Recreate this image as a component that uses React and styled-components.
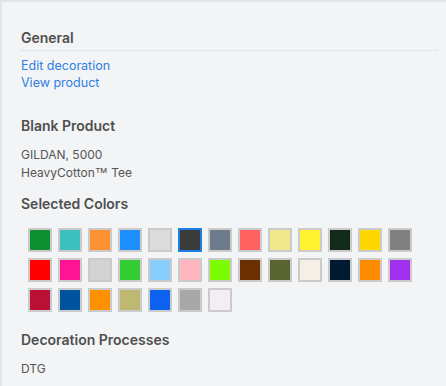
import React from "react";
import styled, { createGlobalStyle } from "styled-components";

const Global = createGlobalStyle`
  html, body { margin: 0; padding: 0; background: #f3f4f6; }
  body { font-family: Inter, "Noto Sans", sans-serif; }
`;

const Panel = styled.div`
  box-sizing: border-box;
  width: 446px;
  height: 386px;
  overflow: hidden;
  background: #f3f4f6;
  border-top: 2px solid #e4e5e7;
  border-left: 2px solid #e4e5e7;
  padding: 26px 8px 0 19px;
  color: #555;
`;

const Section = styled.section`
  margin-top: ${(p) => p.$gap || 0}px;
`;

const Title = styled.h3`
  margin: 0;
  font-size: 14px;
  line-height: 20px;
  font-weight: 600;
  color: #4f4f4f;
  padding-bottom: ${(p) => (p.$rule ? 2 : 0)}px;
  border-bottom: ${(p) => (p.$rule ? "1px dotted #d6d7da" : "none")};
`;

const Links = styled.div`
  margin-top: 6px;
  display: flex;
  flex-direction: column;
`;

const Link = styled.a`
  font-size: 12.5px;
  line-height: 17px;
  color: #2f80e4;
  text-decoration: none;
`;

const Body = styled.div`
  margin-top: ${(p) => p.$gap}px;
  font-size: 12px;
  line-height: 18px;
  color: #555;
`;

const Mark = styled.span`
  font-family: "Liberation Sans", Arial, sans-serif;
  font-size: 13px;
`;

const Swatches = styled.div`
  margin-top: 14px;
  margin-left: 7px;
  display: grid;
  grid-template-columns: repeat(13, 24px);
  gap: 6px;
`;

const Swatch = styled.div`
  box-sizing: border-box;
  width: 24px;
  height: 24px;
  border: 2px solid ${(p) => (p.$selected ? "#1a80e6" : "#cbcbcb")};
  background: ${(p) => p.$color};
`;

const colors = [
  "#0e8f32", "#3fc0c0", "#ff9233", "#1e90ff", "#dcdcdc", "#3b3b3b", "#6d7b8d",
  "#ff6161", "#f0e68c", "#fff22e", "#122b1b", "#ffd700", "#808080",
  "#ff0000", "#ff1493", "#d3d3d3", "#32cd32", "#87cefa", "#ffb6c1", "#7cfc00",
  "#6b3000", "#5a6432", "#f5f0e6", "#001a33", "#ff8c00", "#a12ff0",
  "#bb1035", "#00539c", "#ff9000", "#beb870", "#0e62f0", "#a8a8a8", "#f3eef5",
];

export default function App() {
  return (
    <>
      <Global />
      <Panel>
        <Section>
          <Title $rule>General</Title>
          <Links>
            <Link href="#">Edit decoration</Link>
            <Link href="#">View product</Link>
          </Links>
        </Section>
        <Section $gap={25}>
          <Title>Blank Product</Title>
          <Body $gap={10}>
            GILDAN, 5000
            <br />
            HeavyCotton<Mark>™</Mark> Tee
          </Body>
        </Section>
        <Section $gap={12}>
          <Title>Selected Colors</Title>
          <Swatches>
            {colors.map((c, i) => (
              <Swatch key={i} $color={c} $selected={i === 5} />
            ))}
          </Swatches>
        </Section>
        <Section $gap={18}>
          <Title>Decoration Processes</Title>
          <Body $gap={10}>DTG</Body>
        </Section>
      </Panel>
    </>
  );
}
